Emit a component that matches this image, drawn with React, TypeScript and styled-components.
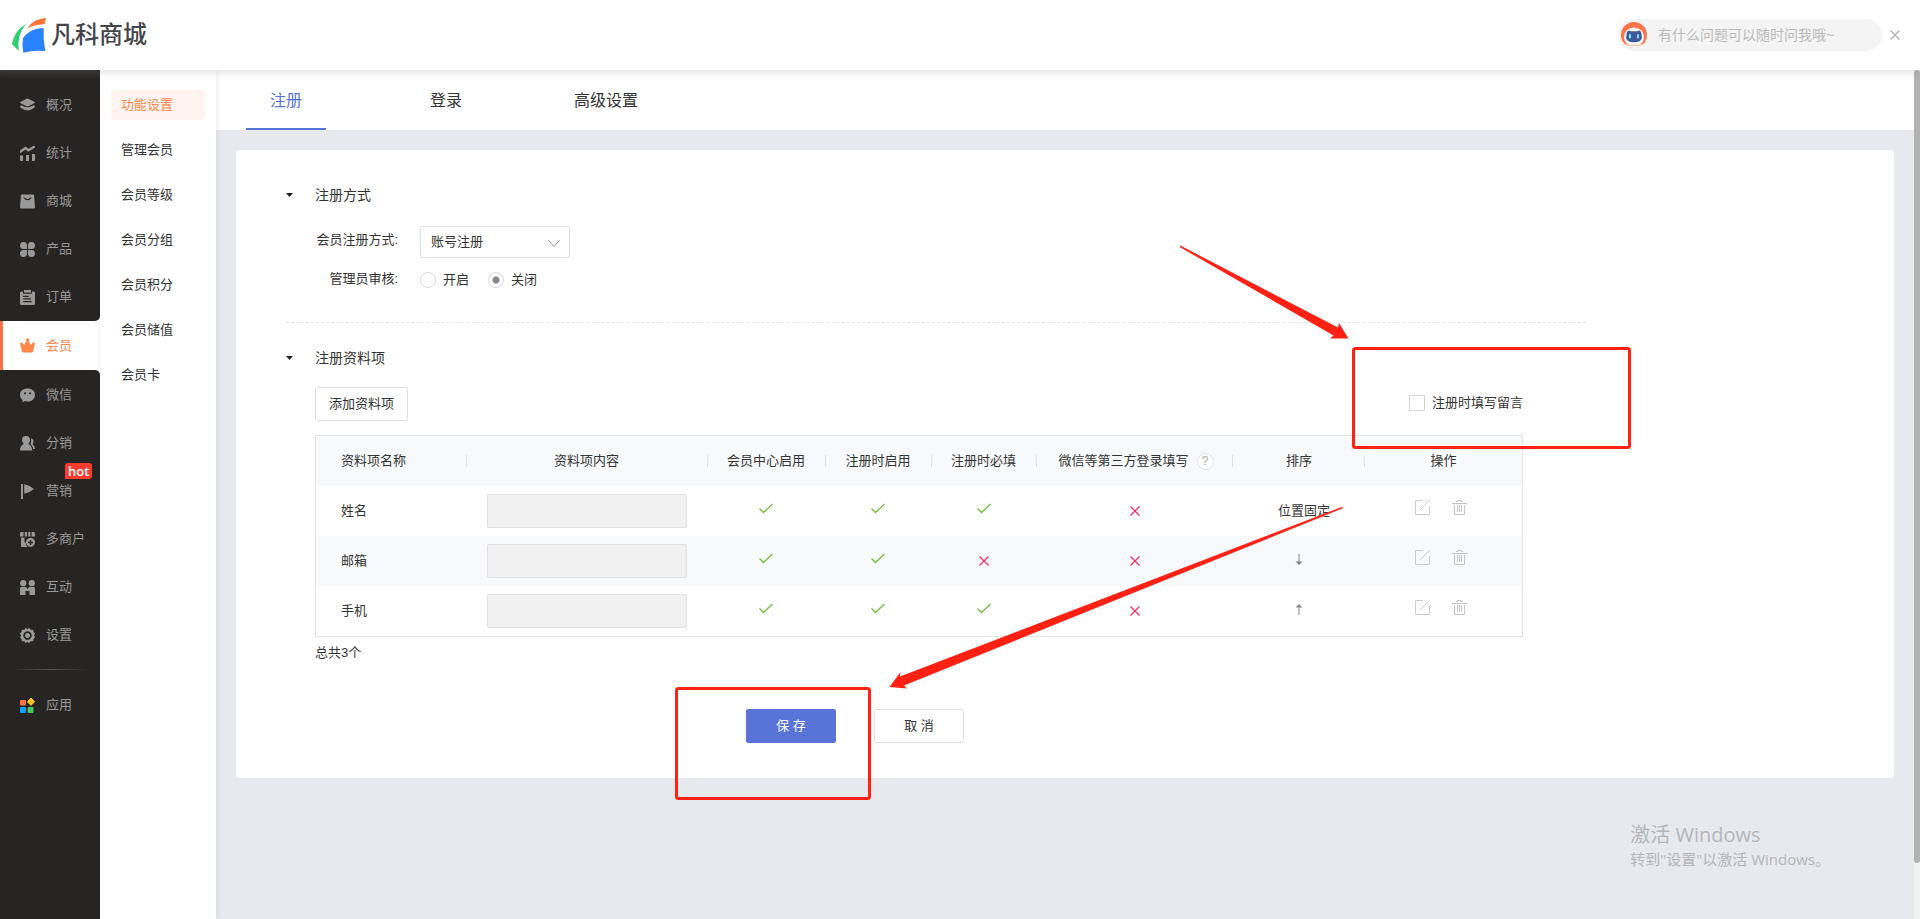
import React from "react";
import styled, { createGlobalStyle } from "styled-components";

const GlobalStyle = createGlobalStyle`
  *, *::before, *::after { box-sizing: border-box; }
  body {
    margin: 0;
    background: #e8e9ed;
    color: #333;
    font: 13px/24px "Liberation Sans", "Noto Sans CJK SC", sans-serif;
  }
  button, input, select { font: inherit; color: inherit; margin: 0; }
  a { color: inherit; text-decoration: none; }
  svg { display: block; flex: none; }
`;

const Page = styled.div`
  position: relative;
  display: flex;
  flex-direction: column;
  height: 100vh;
  overflow: hidden;
`;

/* ---------- header ---------- */

const Header = styled.header`
  position: relative;
  z-index: 2;
  flex: none;
  display: flex;
  align-items: center;
  justify-content: space-between;
  height: 70px;
  padding: 0 20px 0 12px;
  background: #fff;
  box-shadow: 0 2px 8px rgba(0, 0, 0, 0.12);
`;

const Logo = styled.a`
  display: flex;
  align-items: center;
  gap: 5px;
  color: #44454c;
  font-size: 24px;
  font-weight: 500;
  line-height: 34px;
`;

const Assistant = styled.div`
  display: flex;
  align-items: center;
  gap: 8px;
`;

const AskBox = styled.label`
  display: flex;
  align-items: center;
  gap: 11px;
  width: 264px;
  height: 32px;
  padding: 0 3px;
  border-radius: 16px;
  background: #f4f4f4;
`;

const AskInput = styled.input`
  flex: 1;
  min-width: 0;
  padding: 0;
  border: 0;
  outline: 0;
  background: none;
  font-size: 14px;
  &::placeholder { color: #bbb; opacity: 1; }
`;

const PlainButton = styled.button`
  display: inline-flex;
  align-items: center;
  justify-content: center;
  padding: 0;
  border: 0;
  background: none;
  vertical-align: middle;
  cursor: pointer;
`;

/* ---------- side navigation ---------- */

const Body = styled.div`
  flex: 1;
  display: flex;
  min-height: 0;
`;

const Sidebar = styled.nav`
  flex: none;
  display: flex;
  flex-direction: column;
  width: 100px;
  background: #fff;
`;

const NavGroup = styled.div<{ $last?: boolean }>`
  flex: ${(p) => (p.$last ? "1" : "none")};
  padding-top: ${(p) => (p.$last ? "1px" : "11px")};
  border-radius: ${(p) => (p.$last ? "0 5px 0 0" : "0 0 5px 0")};
  background: ${(p) => (p.$last ? "#262523" : "linear-gradient(#3d3c3a, #262523 9px)")};
`;

const NavItem = styled.a<{ $active?: boolean }>`
  position: relative;
  display: flex;
  align-items: center;
  gap: 11px;
  height: ${(p) => (p.$active ? "49px" : "48px")};
  padding-left: ${(p) => (p.$active ? "17px" : "20px")};
  border-left: ${(p) => (p.$active ? "3px solid #ff7345" : "0")};
  color: ${(p) => (p.$active ? "#ff8548" : "#999")};
`;

const HotBadge = styled.span`
  position: absolute;
  top: -4px;
  left: 65px;
  padding: 0 3px;
  border-radius: 3px 3px 3px 0;
  background: #ff3b30;
  color: #fff;
  font-family: "Open Sans", sans-serif;
  font-weight: 600;
  line-height: 16px;
`;

const NavDivider = styled.hr`
  height: 1px;
  margin: 10px 12px 11px;
  border: 0;
  background: linear-gradient(90deg, #262523, #555 50%, #262523);
`;

const SubMenu = styled.nav`
  position: relative;
  z-index: 1;
  flex: none;
  display: flex;
  flex-direction: column;
  gap: 15px;
  width: 116px;
  padding: 20px 11px;
  background: #fff;
  box-shadow: 1px 0 6px rgba(0, 0, 0, 0.08);
`;

const SubItem = styled.a<{ $active?: boolean }>`
  padding-left: 10px;
  border-radius: 4px;
  background: ${(p) => (p.$active ? "#fff4ef" : "none")};
  color: ${(p) => (p.$active ? "#ff8548" : "#333")};
  line-height: 30px;
`;

/* ---------- content ---------- */

const Main = styled.main`
  flex: 1;
  min-width: 0;
  overflow: hidden;
`;

const TabBar = styled.div`
  display: flex;
  gap: 80px;
  height: 60px;
  padding-left: 30px;
  background: #fff;
`;

const Tab = styled.button<{ $active?: boolean }>`
  width: 80px;
  padding: 4px 0 0;
  border: 0;
  border-bottom: 2px solid ${(p) => (p.$active ? "#5874d8" : "transparent")};
  background: none;
  color: ${(p) => (p.$active ? "#5874d8" : "#333")};
  font-size: 16px;
  cursor: pointer;
`;

const Card = styled.section`
  margin: 20px;
  padding: 33px 50px 35px;
  border-radius: 4px;
  background: #fff;
`;

const SectionTitle = styled.h2`
  display: flex;
  align-items: center;
  gap: 22px;
  margin: 0;
  font-size: 14px;
  font-weight: 400;
  line-height: 24px;
`;

const SectionBody = styled.div`
  max-width: 1237px;
  padding-left: 29px;
`;

const Separator = styled.hr`
  max-width: 1300px;
  margin: 27px 0 23px;
  border: 0;
  border-top: 1px dashed #e8e8ea;
`;

const Form = styled.div`
  display: grid;
  grid-template-columns: 83px auto;
  justify-content: start;
  gap: 7px 22px;
  padding-top: 19px;
`;

const FieldLabel = styled.label`
  line-height: 28px;
  text-align: right;
  white-space: nowrap;
`;

const SelectBox = styled.div`
  position: relative;
  width: 150px;
  height: 32px;
  svg { position: absolute; right: 10px; top: 14px; pointer-events: none; }
`;

const Select = styled.select`
  width: 100%;
  height: 100%;
  padding: 0 30px 0 10px;
  border: 1px solid #e0e1e8;
  border-radius: 2px;
  background: #fff;
  appearance: none;
`;

const RadioGroup = styled.div`
  display: flex;
  gap: 19px;
  height: 30px;
`;

const Option = styled.label`
  display: flex;
  align-items: center;
  gap: 7px;
`;

const Radio = styled.input`
  width: 16px;
  height: 16px;
  border: 1px solid #d8d8da;
  border-radius: 50%;
  background: #fff;
  appearance: none;
  &:checked { background: radial-gradient(circle, #888 3px, #fff 4px); }
`;

const Checkbox = styled.input`
  width: 16px;
  height: 16px;
  border: 1px solid #d0d3da;
  background: #fff;
  appearance: none;
`;

const Toolbar = styled.div`
  display: flex;
  align-items: flex-start;
  justify-content: space-between;
  padding: 17px 0 14px;
  ${Option} { height: 32px; }
`;

const Button = styled.button<{ $primary?: boolean; $wide?: boolean }>`
  width: ${(p) => (p.$wide ? "90px" : "auto")};
  height: 34px;
  padding: 0 13px;
  border: 1px solid ${(p) => (p.$primary ? "#5874d8" : "#e0e1e8")};
  border-radius: 2px;
  background: ${(p) => (p.$primary ? "#5874d8" : "#fff")};
  color: ${(p) => (p.$primary ? "#fff" : "#333")};
  cursor: pointer;
`;

const Table = styled.table`
  width: 100%;
  border: 1px solid #e2e3e8;
  border-spacing: 0;
  table-layout: fixed;
  th, td { padding: 0; }
  th:nth-child(-n + 5), td:nth-child(-n + 5) { padding-right: 2px; }
  th:first-child, td:first-child { padding-left: 25px; text-align: left; }
`;

const Row = styled.tr<{ $shaded?: boolean }>`
  height: 50px;
  background: ${(p) => (p.$shaded ? "#f8f9fb" : "#fff")};
`;

const HeadCell = styled.th`
  font-weight: 400;
  white-space: nowrap;
  &:not(:last-child) {
    background: linear-gradient(#e0e1e6, #e0e1e6) right center / 1px 12px no-repeat;
  }
`;

const Cell = styled.td`
  text-align: center;
  svg { margin: 0 auto; }
`;

const FixedOrder = styled.span`
  padding-left: 10px;
`;

const HeadHelp = styled.span`
  display: inline-flex;
  align-items: center;
  gap: 8px;
  padding-left: 2px;
`;

const HelpMark = styled.button`
  width: 17px;
  height: 17px;
  padding: 0;
  border: 1px solid #e2e3e8;
  border-radius: 50%;
  background: #fff;
  color: #aaa;
  font-size: 12px;
  line-height: 14px;
`;

const ContentInput = styled.input`
  display: block;
  width: 200px;
  max-width: 100%;
  height: 34px;
  margin: 0 auto;
  border: 1px solid #e2e2e6;
  border-radius: 2px;
  background: #f1f1f1;
`;

const RowActions = styled.div`
  display: flex;
  justify-content: center;
  gap: 22px;
  padding-right: 6px;
`;

const Total = styled.p`
  margin: 4px 0 44px;
`;

const FormActions = styled.div`
  display: flex;
  gap: 38px;
  padding-left: 431px;
`;

const ScrollTrack = styled.div`
  flex: none;
  width: 6px;
  background: #f1f1f1;
`;

const ScrollThumb = styled.div`
  height: 93.4%;
  border-radius: 3px;
  background: #b2b2b0;
`;

/* ---------- overlays ---------- */

const Markup = styled.svg`
  position: absolute;
  z-index: 3;
  top: 0;
  left: 0;
  pointer-events: none;
`;

const Watermark = styled.div`
  position: absolute;
  z-index: 3;
  right: 90px;
  bottom: 50px;
  color: #b5b6b9;
  font-family: "Open Sans", "Noto Sans CJK SC", sans-serif;
  font-size: 15px;
  line-height: 20px;
  pointer-events: none;
`;

const WatermarkTitle = styled.div`
  font-size: 20px;
  line-height: 28px;
`;

/* ---------- drawings ---------- */

const glyphs: Record<string, React.ReactNode> = {
  layers: <><path d="M6.6.8Q7.5.3 8.4.8L14.6 4Q15.3 4.500 14.600 5L8.400 8.200Q7.500 8.700 6.600 8.200L.4 5Q-.3 4.500.4 4Z" /><path d="M.3 7.800 1.500 7.200Q7.500 11.500 13.500 7.200L14.700 7.800Q15.200 9 14.300 9.800 7.500 15 .7 9.800-.2 9 .3 7.800Z" /></>,
  chart: <><path d="M0 9.500h3V15H1Q0 15 0 14ZM6 9h3v6H6ZM12 8h3v6Q15 15 14 15h-2Z" /><path d="M.6 5.600 5.400 2 8.500 4.200 13.800 1" fill="none" stroke="currentColor" strokeWidth="2.500" strokeLinecap="round" /></>,
  bag: <path fillRule="evenodd" d="M2 .5h11q1 0 1.100 1L15 13q0 1.500-1.500 1.500h-12Q0 14.500 0 13L.9 1.500Q1 .5 2 .5ZM3.300 3.800q4.200 5 8.400 0l-.7-.6q-3.500 3.600-7 0Z" />,
  clover: <path d="M3.500 0Q7 0 7 3.500V7H3.500Q0 7 0 3.500T3.500 0ZM11.500 0Q8 0 8 3.500V7h3.500Q15 7 15 3.500T11.500 0ZM3.500 15Q7 15 7 11.500V8H3.500Q0 8 0 11.500T3.500 15ZM11.500 15Q8 15 8 11.500V8h3.500Q15 8 15 11.500T11.500 15Z" />,
  order: <><path fillRule="evenodd" d="M1.500 1.500H3V3q0 .8.800.8h7.400q.8 0 .8-.8V1.500h1.500Q15 1.500 15 3v10.500q0 1.500-1.500 1.500h-12Q0 15 0 13.500V3Q0 1.500 1.500 1.500ZM3.200 5.700v1.300h5.500V5.700ZM3.200 8.300v1.300h7.800V8.300ZM3.200 11v1.300h8.500V11Z" /><path d="M4 0h7v2.600H4Z" /></>,
  crown: <><circle cx="7.500" cy="2" r="1.800" /><path d="M.4 4.600Q-.2 6 .4 7l1.400 6q.3 1.500 1.800 1.500h7.800q1.500 0 1.800-1.500l1.400-6q.6-1 0-2.400-1.200-.5-2 .4L10.800 7 9 3.500H6L4.200 7 2.400 5Q1.600 4.100.4 4.600Z" /></>,
  wechat: <path fillRule="evenodd" d="M7.500.5C12 .5 15 3 15 7s-3 6.500-7.500 6.500q-1.500 0-2.700-.4L2.500 14.500V12Q0 10 0 7C0 3 3 .5 7.500.5ZM5 4.300a1 1 0 1 0 .01 0ZM10 4.300a1 1 0 1 0 .01 0Z" />,
  people: <><path d="M6 0q4 0 4 4 0 2.500-1.700 4 3.700 1.500 3.900 6.500H0Q0 9.500 3.700 8 2 6.500 2 4q0-4 4-4Z" /><path d="M11 2.500q3 .5 2.500 3.500-.2 1.500-1 2.200 2.500 1.500 2.500 4.800h-2q0-2.500-2.500-5Q11.500 6 11 2.500Z" /></>,
  flag: <path d="M1 0h2v15H1ZM4.200.3Q9 1 14 5 9 9 4.200 9.700Z" />,
  shop: <><path d="M1 0h2.500v4.500H0V1.500Q0 0 1 0ZM4.800 0H7v4.500H4.800ZM8.200 0h2.200v4.500H8.200ZM11.600 0H14q1 .2 1 1.500v3h-3.400ZM1 5.500h3.500v5h1.300Q5.500 13 7.500 15H1Z" /><path fillRule="evenodd" d="M10.500 5.800a4.500 4.500 0 1 0 .01 0ZM9.800 8v1.800H8v1.400h1.800V13h1.400v-1.800H13V9.800h-1.800V8Z" /></>,
  friends: <><circle cx="3.200" cy="3.200" r="3.100" /><circle cx="11.800" cy="3.200" r="3.100" /><path d="M1 7h5l1.500 2L9 7h5q1 .3 1 1.500V15H9.500v-4h-4v4H0V8.500Q0 7.200 1 7Z" /></>,
  gear: <path fillRule="evenodd" d="M5.500 0 7.500 1 9.500 0l1 1.800 2.700 0L13.500 4 15 5.500 14 7.500l1 2L13.500 11l-.3 2.200h-2.700L9.500 15l-2-1-2 1-1-1.800H1.800L1.500 11 0 9.500l1-2-1-2L1.500 4l.3-2.200h2.700ZM7.500 3.300a4.200 4.200 0 1 0 .01 0ZM7.500 5a2.500 2.500 0 1 1-.01 0Z" />,
  apps: <><rect x="0" y="2" width="6" height="5.500" rx="1" fill="#ff7345" /><path d="M11 0 14.500 3.700 11 7.400 7.300 3.700Z" fill="#ffc21a" stroke="#ffc21a" strokeLinejoin="round" /><rect x="0" y="9" width="6" height="6" rx="1" fill="#0aa1ff" /><rect x="7.500" y="9" width="6" height="6" rx="1" fill="#4bc468" /></>,
};

const NavIcon = ({ name }: { name: string }) => (
  <svg width="15" height="15" viewBox="0 0 15 15" fill="currentColor" aria-hidden="true">{glyphs[name]}</svg>
);

const LogoMark = () => (
  <svg width="34" height="35" viewBox="36 54 102 105" aria-hidden="true">
    <path d="M78 72Q42 92 36 133L56 152Q50 105 78 72Z" fill="#2fcf6f" />
    <path d="M82 85Q98 57 138 54L134 72Q106 73 82 85Z" fill="#ff7334" />
    <path d="M69 114Q88 86 131 84Q129 120 136 153Q100 150 70 158Q65 135 69 114Z" fill="#2a82ff" />
  </svg>
);

const Robot = () => (
  <svg width="26" height="26" viewBox="0 0 26 26" aria-hidden="true">
    <circle cx="13" cy="13" r="13" fill="#ff7348" />
    <ellipse cx="13" cy="15" rx="10" ry="9.500" fill="#fff" />
    <path d="M3 22Q13 25 23 22Q19 26 13 26T3 22Z" fill="#fff" />
    <path d="M5.500 22.500Q13 24.500 20.500 22.500" fill="none" stroke="#ffc1ae" strokeWidth="1.500" />
    <path d="M8 8.500 10 9.200H16L18 8.500Q20 8.500 20.500 12 21.500 16 20 18 18 20.300 13 20.300T6 18Q4.500 16 5.500 12 6 8.500 8 8.500Z" fill="#41599c" />
    <rect x="8" y="12" width="2" height="4.500" rx="1" fill="#7be6f5" />
    <rect x="16" y="12" width="2" height="4.500" rx="1" fill="#7be6f5" />
  </svg>
);

const CloseIcon = () => (
  <svg width="10" height="10" viewBox="0 0 10 10" stroke="#b5b5b5" strokeWidth="1.500"><path d="M.5.5 9.500 9.500M9.500.5.5 9.500" /></svg>
);

const Caret = () => (
  <svg width="7" height="4" viewBox="0 0 7 4" fill="#222"><path d="M0 0H7L3.500 4Z" /></svg>
);

const Tick = () => (
  <svg width="14" height="16" viewBox="0 0 14 16" fill="none" stroke="#72bf3c" strokeWidth="1.300" role="img" aria-label="是"><path d="M.5 5.500 4.500 9.500 13.500 1" /></svg>
);

const Cross = () => (
  <svg width="10" height="10" viewBox="0 0 10 10" fill="none" stroke="#ee3063" strokeWidth="1.300" role="img" aria-label="否"><path d="M.5.500 9.500 9.500M9.500.5.5 9.500" /></svg>
);

const MoveIcon = ({ up }: { up?: boolean }) => (
  <svg width="8" height="16" viewBox="0 0 8 16" fill="#888" aria-hidden="true">
    {up ? <path d="M3.500 11V3.500H.5L4 0 7.500 3.500H4.500V11Z" /> : <path d="M3.500 0V7.500H.5L4 11 7.500 7.500H4.500V0Z" />}
  </svg>
);

const EditIcon = () => (
  <svg width="15" height="22" viewBox="0 0 15 22" fill="none" stroke="#ccc" aria-hidden="true"><path d="M8 .5H.5V14.500H14.500V6M5 10 14.500.5" /></svg>
);

const TrashIcon = () => (
  <svg width="15" height="22" viewBox="0 0 15 22" fill="none" stroke="#c4c4c6" aria-hidden="true"><path d="M0 3.500H15M4 1.500H5.500V.5H9.500V1.500H11M2.500 5V14.500H12.500V5M5.500 5V12M7.500 5V12M9.500 5V12" /></svg>
);

/* ---------- data ---------- */

type Item = { icon: string; label: string; hot?: boolean };

const navTop: Item[] = [
  { icon: "layers", label: "概况" },
  { icon: "chart", label: "统计" },
  { icon: "bag", label: "商城" },
  { icon: "clover", label: "产品" },
  { icon: "order", label: "订单" },
];

const navBottom: Item[] = [
  { icon: "wechat", label: "微信" },
  { icon: "people", label: "分销" },
  { icon: "flag", label: "营销", hot: true },
  { icon: "shop", label: "多商户" },
  { icon: "friends", label: "互动" },
  { icon: "gear", label: "设置" },
];

const subItems = ["功能设置", "管理会员", "会员等级", "会员分组", "会员积分", "会员储值", "会员卡"];

const columnWidths = [151, 241, 118, 106, 105, 196, 132, 157];

const rows = [
  { name: "姓名", flags: [true, true, true, false], order: <FixedOrder>位置固定</FixedOrder> },
  { name: "邮箱", flags: [true, true, false, false], order: <PlainButton aria-label="下移"><MoveIcon /></PlainButton> },
  { name: "手机", flags: [true, true, true, false], order: <PlainButton aria-label="上移"><MoveIcon up /></PlainButton> },
];

const NavLink = ({ item, active }: { item: Item; active?: boolean }) => (
  <NavItem href="#" $active={active}>
    <NavIcon name={item.icon} />
    {item.label}
    {item.hot && <HotBadge>hot</HotBadge>}
  </NavItem>
);

export default function App() {
  return (
    <Page>
      <GlobalStyle />
      <Header>
        <Logo href="#"><LogoMark />凡科商城</Logo>
        <Assistant>
          <AskBox>
            <Robot />
            <AskInput placeholder="有什么问题可以随时问我哦~" aria-label="提问" />
          </AskBox>
          <PlainButton aria-label="关闭提问"><CloseIcon /></PlainButton>
        </Assistant>
      </Header>

      <Body>
        <Sidebar>
          <NavGroup>{navTop.map((i) => <NavLink key={i.label} item={i} />)}</NavGroup>
          <NavLink item={{ icon: "crown", label: "会员" }} active />
          <NavGroup $last>
            {navBottom.map((i) => <NavLink key={i.label} item={i} />)}
            <NavDivider />
            <NavLink item={{ icon: "apps", label: "应用" }} />
          </NavGroup>
        </Sidebar>

        <SubMenu>
          {subItems.map((label, i) => <SubItem key={label} href="#" $active={i === 0}>{label}</SubItem>)}
        </SubMenu>

        <Main>
          <TabBar>
            <Tab $active>注册</Tab>
            <Tab>登录</Tab>
            <Tab>高级设置</Tab>
          </TabBar>

          <Card>
            <SectionTitle><Caret />注册方式</SectionTitle>
            <SectionBody>
              <Form>
                <FieldLabel htmlFor="method">会员注册方式:</FieldLabel>
                <SelectBox>
                  <Select id="method"><option>账号注册</option></Select>
                  <svg width="12" height="8" viewBox="0 0 12 8" fill="none" stroke="#888"><path d="M.5.5 6 6.500 11.500.5" /></svg>
                </SelectBox>
                <FieldLabel as="span">管理员审核:</FieldLabel>
                <RadioGroup role="radiogroup" aria-label="管理员审核">
                  <Option><Radio type="radio" name="audit" />开启</Option>
                  <Option><Radio type="radio" name="audit" defaultChecked />关闭</Option>
                </RadioGroup>
              </Form>
            </SectionBody>

            <Separator />

            <SectionTitle><Caret />注册资料项</SectionTitle>
            <SectionBody>
              <Toolbar>
                <Button>添加资料项</Button>
                <Option><Checkbox type="checkbox" />注册时填写留言</Option>
              </Toolbar>
              <Table>
                <colgroup>{columnWidths.map((w, i) => <col key={i} width={w} />)}</colgroup>
                <thead>
                  <Row $shaded>
                    <HeadCell>资料项名称</HeadCell>
                    <HeadCell>资料项内容</HeadCell>
                    <HeadCell>会员中心启用</HeadCell>
                    <HeadCell>注册时启用</HeadCell>
                    <HeadCell>注册时必填</HeadCell>
                    <HeadCell><HeadHelp>微信等第三方登录填写<HelpMark>?</HelpMark></HeadHelp></HeadCell>
                    <HeadCell>排序</HeadCell>
                    <HeadCell>操作</HeadCell>
                  </Row>
                </thead>
                <tbody>
                  {rows.map((row, i) => (
                    <Row key={row.name} $shaded={i % 2 === 1}>
                      <Cell>{row.name}</Cell>
                      <Cell><ContentInput disabled aria-label={row.name} /></Cell>
                      {row.flags.map((on, k) => <Cell key={k}>{on ? <Tick /> : <Cross />}</Cell>)}
                      <Cell>{row.order}</Cell>
                      <Cell>
                        <RowActions>
                          <PlainButton aria-label="编辑"><EditIcon /></PlainButton>
                          <PlainButton aria-label="删除"><TrashIcon /></PlainButton>
                        </RowActions>
                      </Cell>
                    </Row>
                  ))}
                </tbody>
              </Table>
              <Total>总共3个</Total>
              <FormActions>
                <Button $primary $wide>保 存</Button>
                <Button $wide>取 消</Button>
              </FormActions>
            </SectionBody>
          </Card>
        </Main>
        <ScrollTrack><ScrollThumb /></ScrollTrack>
      </Body>

      <Markup width="1640" height="810" viewBox="0 0 1640 810" fill="#ff2113" aria-hidden="true">
        <path d="M1180.300 245.500 1338 327.500 1339 323 1348.500 338.500 1330 338.500 1333.500 335.500 1179.700 247Z" />
        <path d="M1342.300 506.800 900 676.500 900.500 672 889.500 687 907 688.500 904 685.500 1342.800 508.300Z" />
        <rect x="1353.500" y="348.500" width="276" height="99" rx="2" fill="none" stroke="#ff2113" strokeWidth="3" />
        <rect x="676.500" y="688.500" width="193" height="110" rx="2" fill="none" stroke="#ff2113" strokeWidth="3" />
      </Markup>
      <Watermark>
        <WatermarkTitle>激活 Windows</WatermarkTitle>
        转到"设置"以激活 Windows。
      </Watermark>
    </Page>
  );
}
